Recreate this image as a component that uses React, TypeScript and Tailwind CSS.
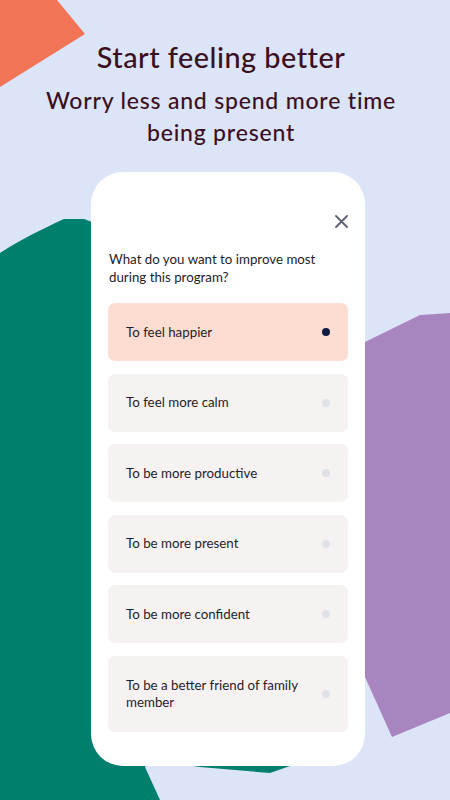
import React from "react";

const options = [
  "To feel happier",
  "To feel more calm",
  "To be more productive",
  "To be more present",
  "To be more confident",
  "To be a better friend of family member",
];

export default function App() {
  return (
    <div
      className="relative w-[450px] h-[800px] overflow-hidden bg-[#dce4f8]"
      style={{ fontFamily: "Lato, 'Open Sans', sans-serif" }}
    >
      <svg className="absolute inset-0" width="450" height="800" viewBox="0 0 450 800">
        <polygon points="0,0 57,0 85,34 0,87" fill="#f27457" />
        <path
          d="M0,253 C20,240 40,230 64,219 L84,219 L100,225 L200,240 L300,700 L290,766 L270,773 L200,767 L150,760 L145,767 L160,800 L0,800 Z"
          fill="#007f6e"
        />
        <path d="M330,360 L365,342 L420,315 L450,313 L450,713 L392,737 L365,677 L330,640 Z" fill="#a985bf" />
      </svg>

      <div className="relative flex flex-col items-center pt-[40px]">
        <h1 className="mr-[8px] text-[28.8px] leading-[34px] text-[#3b0f22] font-medium tracking-[0.5px]">
          Start feeling better
        </h1>
        <p className="mr-[8px] mt-[10px] text-[23px] leading-[32px] text-[#3b0f22] text-center font-medium tracking-[0.8px] w-[380px]">
          Worry less and spend more time
          <br />
          being present
        </p>

        <div className="mt-[24px] ml-[6px] w-[274px] h-[594px] bg-white rounded-[32px] flex flex-col px-[17px]">
          <div className="flex justify-end pt-[43px]">
            <svg width="13" height="13" viewBox="0 0 13 13">
              <path d="M1 1 L12 12 M12 1 L1 12" stroke="#5c6170" strokeWidth="1.8" strokeLinecap="round" />
            </svg>
          </div>
          <p className="mt-[22px] pl-[1px] text-[13.3px] leading-[18px] text-[#1d1d2b]">
            What do you want to improve most during this program?
          </p>
          <div className="mt-[17px] flex flex-col gap-[12.6px]">
            {options.map((o, i) => (
              <div
                key={o}
                className={
                  "flex items-center justify-between rounded-[7px] pl-[18px] pr-[18px] " +
                  (i === 0 ? "bg-[#fddcd2]" : "bg-[#f6f2f1]") +
                  (i === 5 ? " h-[76px]" : " h-[58px]")
                }
              >
                <span className="text-[13.3px] leading-[17px] text-[#1d1d2b] w-[190px]">{o}</span>
                <span
                  className={
                    "w-[8px] h-[8px] rounded-full " + (i === 0 ? "bg-[#0f1b40]" : "bg-[#e0e1e7]")
                  }
                />
              </div>
            ))}
          </div>
        </div>
      </div>
    </div>
  );
}
